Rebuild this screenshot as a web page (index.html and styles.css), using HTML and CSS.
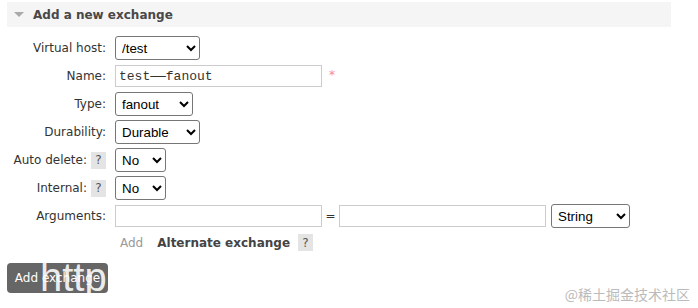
FILE: index.html
```html
<!DOCTYPE html>
<html>
<head>
<meta charset="utf-8">
<link rel="stylesheet" href="styles.css">
</head>
<body>
<div class="section">
  <div class="section-head"><span class="tri"></span>Add a new exchange</div>
  <form class="form">
    <div class="row">
      <label class="lbl">Virtual host:</label>
      <select class="sel w85"><option>/test</option></select>
    </div>
    <div class="row">
      <label class="lbl">Name:</label>
      <input class="txt mono" type="text" value="test——fanout">
      <span class="req">*</span>
    </div>
    <div class="row">
      <label class="lbl">Type:</label>
      <select class="sel w78"><option>fanout</option></select>
    </div>
    <div class="row">
      <label class="lbl">Durability:</label>
      <select class="sel w85"><option>Durable</option></select>
    </div>
    <div class="row">
      <label class="lbl">Auto delete: <span class="help">?</span></label>
      <select class="sel w51"><option>No</option></select>
    </div>
    <div class="row">
      <label class="lbl">Internal: <span class="help">?</span></label>
      <select class="sel w51"><option>No</option></select>
    </div>
    <div class="row">
      <label class="lbl">Arguments:</label>
      <input class="txt" type="text">
      <span class="eq">=</span>
      <input class="txt" type="text">
      <select class="sel w79 ml"><option>String</option></select>
    </div>
    <div class="row sub">
      <span class="lbl"></span>
      <span class="add">Add</span>
      <span class="alt">Alternate exchange</span>
      <span class="help">?</span>
    </div>
    <div class="btn-row">
      <button type="button" class="btn">Add exchange</button>
      <span class="wm-http">http</span>
    </div>
  </form>
</div>
<div class="wm-cn">@稀土掘金技术社区</div>
</body>
</html>
```

FILE: styles.css
```css
html, body {
  margin: 0;
  padding: 0;
  background: #fff;
}
body {
  font-family: "DejaVu Sans", Verdana, sans-serif;
  font-size: 12px;
  color: #484848;
  width: 698px;
  height: 308px;
  position: relative;
  overflow: hidden;
}
.section-head {
  margin: 2px 27px 0 7px;
  height: 25px;
  background: #f5f5f5;
  display: flex;
  align-items: center;
  font-weight: bold;
  font-size: 12px;
  color: #484848;
  padding-left: 7px;
}
.tri {
  width: 0;
  height: 0;
  border-left: 5px solid transparent;
  border-right: 5px solid transparent;
  border-top: 5px solid #aaa;
  margin-right: 9px;
}
.form {
  padding-top: 7px;
  margin: 0;
}
.row {
  display: flex;
  align-items: center;
  height: 28px;
}
.lbl {
  width: 106px;
  flex: none;
  text-align: right;
  margin-right: 9px;
  color: #333;
  display: flex;
  justify-content: flex-end;
  align-items: center;
  gap: 4px;
}
.help {
  display: inline-flex;
  align-items: center;
  justify-content: center;
  width: 15px;
  height: 17px;
  background: #e4e4e4;
  color: #555;
  font-size: 12px;
}
.sel {
  font-family: "Liberation Sans", Arial, sans-serif;
  font-size: 13.33px;
  height: 24px;
  border: 1px solid #767676;
  border-radius: 3px;
  background: #fff;
  color: #000;
  padding: 0 2px;
  margin: 0;
}
.w85 { width: 85px; }
.w78 { width: 78px; }
.w51 { width: 51px; }
.w79 { width: 79px; }
.ml { margin-left: 5px; }
.txt {
  width: 207px;
  height: 22px;
  box-sizing: border-box;
  border: 1px solid #ccc;
  margin: 0;
  padding: 1px 3px;
  font-family: "Liberation Sans", Arial, sans-serif;
  font-size: 13.33px;
}
.mono {
  font-family: "Liberation Mono", "Courier New", monospace;
  font-size: 13px;
  color: #333;
}
.req {
  color: #f88;
  margin-left: 7px;
  font-size: 12px;
  align-self: flex-start;
  margin-top: 6px;
}
.eq {
  width: 17px;
  text-align: center;
  color: #333;
}
.sub {
  height: 23px;
  margin-top: 1px;
}
.add {
  color: #999;
  margin-left: 5px;
}
.alt {
  font-weight: bold;
  color: #444;
  margin-left: 14px;
  margin-right: 8px;
}
.btn-row {
  position: relative;
  margin: 9px 0 0 7px;
  height: 30px;
}
.btn {
  width: 101px;
  height: 30px;
  background: #666;
  color: #fff;
  border: none;
  border-radius: 4px;
  font-family: "DejaVu Sans", Verdana, sans-serif;
  font-size: 12px;
  padding: 0;
}
.wm-http {
  position: absolute;
  left: 33px;
  top: -6px;
  font-family: "Liberation Sans", Arial, sans-serif;
  font-size: 40px;
  color: rgba(255,255,255,0.9);
  pointer-events: none;
  line-height: 1;
}
.wm-cn {
  position: absolute;
  right: 8px;
  bottom: 7px;
  font-family: "Noto Sans CJK SC", sans-serif;
  font-size: 14px;
  color: #bbb;
  line-height: 1;
}
```
